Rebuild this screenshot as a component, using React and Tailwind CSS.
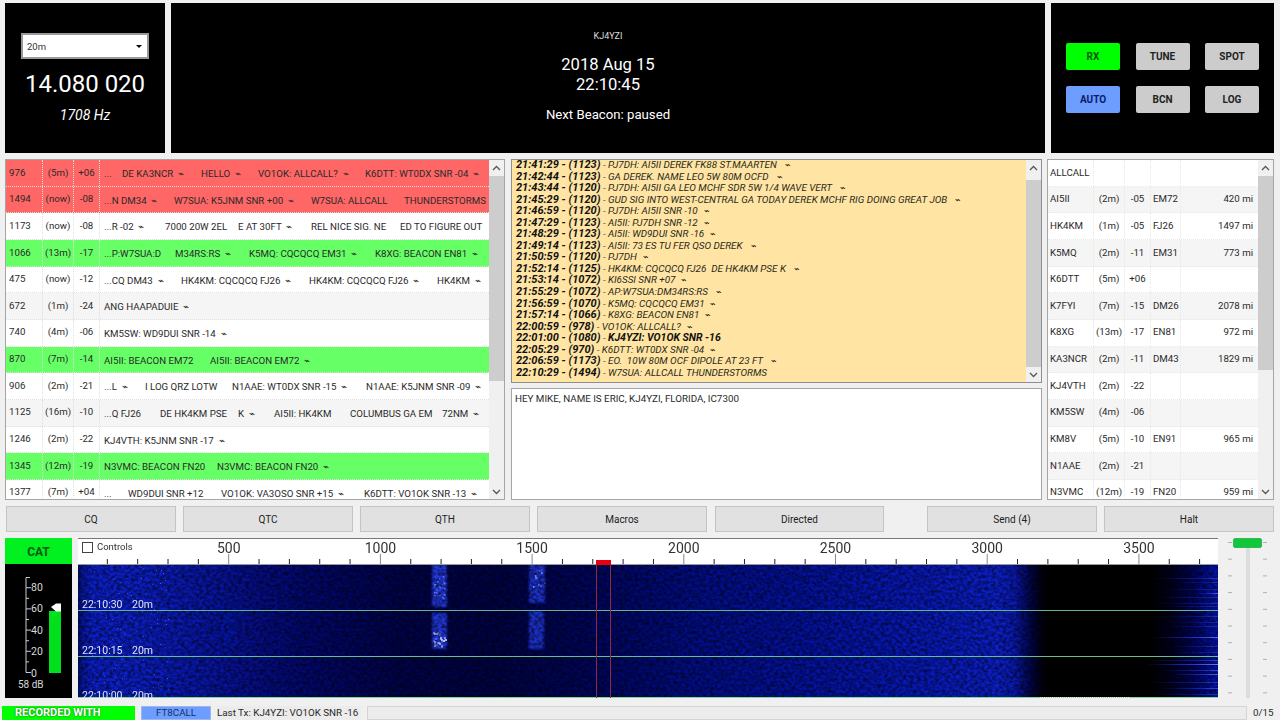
import React from 'react';

const W = ' ⌁';

const decodes = [
  { f: '976', a: '(5m)', s: '+06', c: 'red', m: [['...', 104], ['DE KA3NCR ' + W, 122], ['HELLO ' + W, 201], ['VO1OK: ALLCALL? ' + W, 258], ['K6DTT: WT0DX SNR -04 ' + W, 365]] },
  { f: '1494', a: '(now)', s: '-08', c: 'red', m: [['...N DM34 ' + W, 104], ['W7SUA: K5JNM SNR +00 ' + W, 174], ['W7SUA: ALLCALL', 311], ['THUNDERSTORMS', 404]] },
  { f: '1173', a: '(now)', s: '-08', m: [['...R -02 ' + W, 104], ['7000 20W 2EL', 165], ['E AT 30FT ' + W, 238], ['REL NICE SIG. NE', 311], ['ED TO FIGURE OUT', 400]] },
  { f: '1066', a: '(13m)', s: '-17', c: 'green', m: [['...P:W7SUA:D', 104], ['M34RS:RS ' + W, 175], ['K5MQ: CQCQCQ EM31 ' + W, 249], ['K8XG: BEACON EN81 ' + W, 375]] },
  { f: '475', a: '(now)', s: '-12', m: [['...CQ DM43 ' + W, 104], ['HK4KM: CQCQCQ FJ26 ' + W, 181], ['HK4KM: CQCQCQ FJ26 ' + W, 309], ['HK4KM ' + W, 437]] },
  { f: '672', a: '(1m)', s: '-24', m: [['ANG HAAPADUIE ' + W, 104]] },
  { f: '740', a: '(4m)', s: '-06', m: [['KM5SW: WD9DUI SNR -14 ' + W, 104]] },
  { f: '870', a: '(7m)', s: '-14', c: 'green', m: [['AI5II: BEACON EM72', 104], ['AI5II: BEACON EM72 ' + W, 210]] },
  { f: '906', a: '(2m)', s: '-21', m: [['...L ' + W, 104], ['I LOG QRZ LOTW', 145], ['N1AAE: WT0DX SNR -15 ' + W, 232], ['N1AAE: K5JNM SNR -09 ' + W, 366]] },
  { f: '1125', a: '(16m)', s: '-10', m: [['...Q FJ26', 104], ['DE HK4KM PSE', 160], ['K ' + W, 238], ['AI5II: HK4KM', 274], ['COLUMBUS GA EM', 350], ['72NM ' + W, 442]] },
  { f: '1246', a: '(2m)', s: '-22', m: [['KJ4VTH: K5JNM SNR -17 ' + W, 104]] },
  { f: '1345', a: '(12m)', s: '-19', c: 'green', m: [['N3VMC: BEACON FN20', 104], ['N3VMC: BEACON FN20 ' + W, 217]] },
  { f: '1377', a: '(7m)', s: '+04', m: [['...', 104], ['WD9DUI SNR +12', 128], ['VO1OK: VA3OSO SNR +15 ' + W, 221], ['K6DTT: VO1OK SNR -13 ' + W, 364]] },
];

const logLines = [
  ['21:41:29 - (1123)', 'PJ7DH: AI5II DEREK FK88 ST.MAARTEN  ' + W],
  ['21:42:44 - (1123)', 'GA DEREK. NAME LEO 5W 80M OCFD  ' + W],
  ['21:43:44 - (1120)', 'PJ7DH: AI5II GA LEO MCHF SDR 5W 1/4 WAVE VERT  ' + W],
  ['21:45:29 - (1120)', 'GUD SIG INTO WEST-CENTRAL GA TODAY DEREK MCHF RIG DOING GREAT JOB  ' + W],
  ['21:46:59 - (1120)', 'PJ7DH: AI5II SNR -10 ' + W],
  ['21:47:29 - (1123)', 'AI5II: PJ7DH SNR -12 ' + W],
  ['21:48:29 - (1123)', 'AI5II: WD9DUI SNR -16 ' + W],
  ['21:49:14 - (1123)', 'AI5II: 73 ES TU FER QSO DEREK  ' + W],
  ['21:50:59 - (1120)', 'PJ7DH ' + W],
  ['21:52:14 - (1125)', 'HK4KM: CQCQCQ FJ26  DE HK4KM PSE K  ' + W],
  ['21:53:14 - (1072)', 'KI6SSI SNR +07 ' + W],
  ['21:55:29 - (1072)', 'AP:W7SUA:DM34RS:RS  ' + W],
  ['21:56:59 - (1070)', 'K5MQ: CQCQCQ EM31 ' + W],
  ['21:57:14 - (1066)', 'K8XG: BEACON EN81 ' + W],
  ['22:00:59 - (978)', 'VO1OK: ALLCALL? ' + W],
  ['22:01:00 - (1080)', 'KJ4YZI: VO1OK SNR -16', true],
  ['22:05:29 - (970)', 'K6DTT: WT0DX SNR -04 ' + W],
  ['22:06:59 - (1173)', 'EO.  10W 80M OCF DIPOLE AT 23 FT  ' + W],
  ['22:10:29 - (1494)', 'W7SUA: ALLCALL THUNDERSTORMS'],
];

const stations = [
  ['ALLCALL'],
  ['AI5II', '(2m)', '-05', 'EM72', '420 mi'],
  ['HK4KM', '(1m)', '-05', 'FJ26', '1497 mi'],
  ['K5MQ', '(2m)', '-11', 'EM31', '773 mi'],
  ['K6DTT', '(5m)', '+06'],
  ['K7FYI', '(7m)', '-15', 'DM26', '2078 mi'],
  ['K8XG', '(13m)', '-17', 'EN81', '972 mi'],
  ['KA3NCR', '(2m)', '-11', 'DM43', '1829 mi'],
  ['KJ4VTH', '(2m)', '-22'],
  ['KM5SW', '(4m)', '-06'],
  ['KM8V', '(5m)', '-10', 'EN91', '965 mi'],
  ['N1AAE', '(2m)', '-21'],
  ['N3VMC', '(12m)', '-19', 'FN20', '959 mi'],
];

const hzX = (hz) => hz * 0.3034 - 1;

function Chevron({ up }) {
  return (
    <svg width="9" height="6" viewBox="0 0 9 6" fill="none" stroke="#555" strokeWidth="1.3">
      <path d={up ? 'M1 5l3.5-3.5L8 5' : 'M1 1l3.5 3.5L8 1'} />
    </svg>
  );
}

function Scrollbar({ top, height }) {
  return (
    <div className="w-[15px] shrink-0 self-stretch bg-[#f0f0f0] flex flex-col items-center relative">
      <div className="h-[15px] flex items-center justify-center"><Chevron up /></div>
      <div className="absolute left-0 w-[15px] bg-[#cdcdcd]" style={{ top, height }} />
      <div className="mt-auto h-[15px] flex items-center justify-center"><Chevron /></div>
    </div>
  );
}

function DecodeRow({ row, index }) {
  const bg = row.c === 'red' ? 'bg-[#ff6666]' : row.c === 'green' ? 'bg-[#66ff66]' : index % 2 ? 'bg-[#f5f5f5]' : 'bg-white';
  return (
    <div className={`flex h-[26.67px] shrink-0 items-center border-b border-dotted border-[#e0e0e0] ${bg}`}>
      <div className="w-[37px] h-full flex items-center pl-[3px] border-r border-dotted border-[#e0e0e0]">{row.f}</div>
      <div className="w-[31px] h-full flex items-center justify-center border-r border-dotted border-[#e0e0e0]">{row.a}</div>
      <div className="w-[26px] h-full flex items-center justify-center border-r border-dotted border-[#e0e0e0]">{row.s}</div>
      <div className="flex-1 h-full relative">
        {row.m.map(([text, x]) => (
          <span key={x} className="absolute top-[7px] whitespace-pre" style={{ left: x - 100 }}>{text}</span>
        ))}
      </div>
    </div>
  );
}

function StationRow({ row, index }) {
  const cell = 'h-full flex items-center border-r border-dotted border-[#e8e8e8]';
  return (
    <div className={`flex h-[26.67px] shrink-0 items-center border-b border-dotted border-[#e8e8e8] ${index % 2 ? 'bg-[#f5f5f5]' : 'bg-white'}`}>
      <div className={`${cell} w-[46px] pl-[2px] whitespace-nowrap`}>{row[0]}</div>
      <div className={`${cell} w-[31px] justify-center`}>{row[1]}</div>
      <div className={`${cell} w-[26px] justify-center`}>{row[2]}</div>
      <div className={`${cell} w-[30px] pl-[2px]`}>{row[3]}</div>
      <div className="h-full flex-1 flex items-center justify-end pr-[5px]">{row[4]}</div>
    </div>
  );
}

function ActionButton({ label, active }) {
  return (
    <div className={`w-[54px] h-[27px] rounded-[2px] flex items-center justify-center font-bold text-[10px] ${active || 'bg-[#cccccc] text-[#222]'}`}>
      {label}
    </div>
  );
}

function BarButton({ label, className }) {
  return (
    <div className={`h-[26px] pt-px bg-[#e1e1e1] border border-[#c4c4c4] flex items-center justify-center text-[#222] text-[10px] ${className}`}>{label}</div>
  );
}

function SMeter() {
  return (
    <svg width="67" height="134" viewBox="0 0 67 134" className="block">
      <path d="M25 13.5h-4v95h4" fill="none" stroke="#ccc" strokeWidth="1" />
      {[0, 1, 2, 3, 4, 5, 6, 7, 8].map((i) => (
        <line key={i} x1="21" x2={i % 2 ? 24 : 26} y1={108.5 - i * 10.6} y2={108.5 - i * 10.6} stroke="#ccc" />
      ))}
      {[['80', 23], ['60', 44], ['40', 66], ['20', 87], ['0', 109]].map(([t, y]) => (
        <text key={t} x="26" y={y + 4} fontSize="10.5" fill="#d8d8d8">{t}</text>
      ))}
      <rect x="44" y="47" width="12" height="62" fill="#00e01c" />
      <path d="M46 43l5-3.5h5v8h-5z" fill="#fff" />
      <text x="13" y="124" fontSize="10" fill="#d8d8d8">58 dB</text>
    </svg>
  );
}

function Ruler() {
  const ticks = [];
  for (let hz = 100; hz <= 3700; hz += 100) ticks.push(hz);
  return (
    <svg width="1140" height="26" viewBox="0 0 1140 26" className="absolute left-0 top-0">
      {ticks.map((hz) => (
        <line key={hz} x1={hzX(hz)} x2={hzX(hz)} y1={hz % 500 ? 20 : 15} y2="25" stroke={hz % 500 ? '#222' : '#888'} />
      ))}
      <rect x="0" y="25" width="1140" height="1" fill="#9a9a9a" />
      {[500, 1000, 1500, 2000, 2500, 3000, 3500].map((hz) => (
        <text key={hz} x={hzX(hz)} y="14" fontSize="14" textAnchor="middle" fill="#333">{hz}</text>
      ))}
      <rect x={596 - 78} y="21" width="15" height="5" fill="#e8000c" />
    </svg>
  );
}

// small deterministic generator so the speckle stays put between renders
function speckle(count, x0, x1, y0, y1, seed) {
  let s = seed;
  const next = () => {
    s = (s * 16807) % 2147483647;
    return s / 2147483647;
  };
  const out = [];
  for (let i = 0; i < count; i++) {
    out.push({ x: Math.round(x0 + next() * (x1 - x0)), y: Math.round(y0 + next() * (y1 - y0)), o: 0.2 + next() * 0.5 });
  }
  return out;
}

const streaks = [
  [14, 0.35, 1150], [18, 0.3, 1176], [25, 0.25, 1160], [29, 0.7, 1195], [33, 0.3, 1156], [39, 0.25, 1150], [42, 0.25, 1160],
  [52, 0.3, 1160], [58, 0.25, 1166], [62, 0.25, 1158], [73, 0.8, 1152], [82, 0.3, 1166], [88, 0.25, 1170],
  [96, 0.4, 1140], [100, 0.9, 1144], [106, 0.5, 1160], [110, 0.7, 1170], [118, 0.4, 1145], [124, 0.5, 1160], [130, 0.3, 1150],
];

function Waterfall() {
  const off = 78;
  return (
    <svg width="1140" height="134" viewBox="0 0 1140 134" className="block">
      <defs>
        <linearGradient id="wf">
          {[
            [78, '#030f70'], [84, '#0718a8'], [92, '#0c20d0'], [130, '#0c20cc'], [180, '#0a1ab8'], [250, '#060f90'], [300, '#030874'], [400, '#01034e'],
            [500, '#010348'], [600, '#000664'], [700, '#020e8c'], [800, '#0412a0'], [900, '#0718b8'], [1000, '#0c20cc'], [1014, '#0a1ab8'],
            [1030, '#020650'], [1042, '#000010'], [1050, '#000000'], [1150, '#000000'], [1170, '#00001c'], [1195, '#000560'], [1218, '#0414b8'],
          ].map(([x, c]) => (
            <stop key={x} offset={(x - 78) / 1140} stopColor={c} />
          ))}
        </linearGradient>
        <linearGradient id="streak">
          <stop offset="0" stopColor="#2030d0" stopOpacity="0" />
          <stop offset="0.7" stopColor="#3040e0" />
          <stop offset="1" stopColor="#8088f0" />
        </linearGradient>
        <filter id="grain" x="0" y="0" width="100%" height="100%">
          <feTurbulence type="fractalNoise" baseFrequency="0.28 0.34" numOctaves="2" seed="7" />
          <feColorMatrix values="0 0 0 0 0  0 0 0 0 0  0 0 0 0 0  1.3 0 0 0 -0.4" />
        </filter>
        <filter id="soft" x="-30%" y="-30%" width="160%" height="160%"><feGaussianBlur stdDeviation="1.2" /></filter>
      </defs>
      <rect width="1140" height="134" fill="url(#wf)" />
      <g filter="url(#soft)">
        <rect x={432 - off} y="0" width="15" height="43" fill="#2038e0" />
        <rect x={432 - off} y="49" width="15" height="36" fill="#2038e0" />
        <rect x={529 - off} y="0" width="16" height="39" fill="#1c30d0" />
        <rect x={529 - off} y="47" width="15" height="38" fill="#1c30d0" />
        <rect x={222 - off} y="47" width="14" height="36" fill="#0c1cc0" opacity="0.35" />
      </g>
      <rect width="1140" height="134" fill="#000" filter="url(#grain)" />
      {speckle(24, 356, 366, 12, 34, 11).map((p, i) => <rect key={i} x={p.x} y={p.y} width="1.5" height="1.5" fill="#8fa8ff" opacity={p.o} />)}
      {speckle(30, 355, 367, 68, 82, 23).map((p, i) => <rect key={i} x={p.x} y={p.y} width="2" height="2" fill="#c8d0f8" opacity={p.o} />)}
      {speckle(10, 455, 466, 2, 25, 37).map((p, i) => <rect key={i} x={p.x} y={p.y} width="1.5" height="2" fill="#a8b8ff" opacity={p.o} />)}
      {speckle(110, 14, 90, 2, 128, 51).map((p, i) => <rect key={i} x={p.x} y={p.y} width="1" height="1" fill="#7080f0" opacity={p.o} />)}
      {streaks.map(([y, o, x]) => (
        <rect key={y} x={x - off} y={y} width={1218 - x} height="1" fill="url(#streak)" opacity={o} />
      ))}
      <rect y="46" width="1140" height="1" fill="#62b48c" />
      <rect y="92" width="1140" height="1" fill="#62c08c" />
      <rect y="133" width="1140" height="1" fill="#80d890" />
      <line x1={1040 - off} x2={1130 - off} y1="133.5" y2="133.5" stroke="#e8f0e8" strokeDasharray="1 1" />
      <rect x={596 - off} y="0" width="1" height="134" fill="#8c2c3c" />
      <rect x={610 - off} y="0" width="1" height="134" fill="#8c2c3c" />
      <g fontSize="10.5" fill="#dfe3ff">
        <text x="4" y="44">22:10:30</text>
        <text x="54" y="44">20m</text>
        <text x="4" y="90">22:10:15</text>
        <text x="54" y="90">20m</text>
        <text x="4" y="135">22:10:00</text>
        <text x="54" y="135">20m</text>
      </g>
    </svg>
  );
}

function VolumeSlider() {
  return (
    <svg width="40" height="160" viewBox="0 0 40 160" className="block">
      <rect x="18" y="4" width="4" height="156" fill="#dcdcdc" />
      {[0, 1, 2, 3, 4, 5, 6, 7, 8, 9].map((i) => (
        <g key={i} stroke="#b0b0b0">
          <line x1="0" x2="4" y1={4.5 + i * 16.7} y2={4.5 + i * 16.7} />
          <line x1="35" x2="39" y1={4.5 + i * 16.7} y2={4.5 + i * 16.7} />
        </g>
      ))}
      <rect x="5.5" y="0.5" width="28" height="9" rx="1.5" fill="#10c83c" stroke="#0a9a2c" strokeWidth="0.6" />
    </svg>
  );
}

export default function App() {
  return (
    <div className="w-[1280px] h-[720px] overflow-hidden bg-[#f0f0f0] flex flex-col pt-[3px] text-[9.7px] text-[#2a2a2a] font-['Roboto',sans-serif]">
      {/* top panels */}
      <div className="flex h-[150px] shrink-0 pl-[5px] gap-[6px] text-white">
        <div className="w-[160px] bg-black flex flex-col items-center">
          <div className="mt-[30px] w-[128px] h-[26px] bg-white border-2 border-[#9a9a9a] flex items-center pt-[3px] pl-[4px] pr-[2px] text-[#333] text-[9.5px]">
            <span className="flex-1">20m</span>
            <span className="w-0 h-0 border-x-[3px] border-x-transparent border-t-[3px] border-t-black mr-[3px] -mt-[3px]" />
          </div>
          <div className="mt-[10px] text-[24px] leading-[30px] text-white">14.080 020</div>
          <div className="mt-[7px] italic text-[14px] leading-[18px]">1708 Hz</div>
        </div>
        <div className="w-[874px] bg-black flex flex-col items-center">
          <div className="mt-[27px] text-[9px] leading-[12px] text-[#ddd]">KJ4YZI</div>
          <div className="mt-[13px] text-[16.6px] leading-[20px]">2018 Aug 15</div>
          <div className="text-[16.6px] leading-[19px]">22:10:45</div>
          <div className="mt-[13px] text-[13.2px] leading-[16px]">Next Beacon: paused</div>
        </div>
        <div className="w-[223px] bg-black pl-[15px] pt-[40px] flex flex-col gap-[16px]">
          <div className="flex gap-[15.5px]">
            <ActionButton label="RX" active="bg-[#00ff00] text-[#0a5a0a]" />
            <ActionButton label="TUNE" />
            <ActionButton label="SPOT" />
          </div>
          <div className="flex gap-[15.5px]">
            <ActionButton label="AUTO" active="bg-[#6d9eff] text-[#0a1a6a]" />
            <ActionButton label="BCN" />
            <ActionButton label="LOG" />
          </div>
        </div>
      </div>

      {/* decode tables */}
      <div className="flex h-[341px] shrink-0 mt-[6px] pl-[5px]">
        <div className="w-[500px] border border-[#a5a5a5] flex overflow-hidden bg-white">
          <div className="flex-1 flex flex-col overflow-hidden">
            {decodes.map((row, i) => <DecodeRow key={row.f} row={row} index={i} />)}
          </div>
          <Scrollbar top={16} height={205} />
        </div>
        <div className="w-[531px] ml-[6px] flex flex-col gap-[5px]">
          <div className="h-[224px] border border-[#8f8f8f] bg-[#ffe4a3] flex overflow-hidden">
            <div className="flex-1 pl-[4px] text-[9.9px] leading-[11.56px] italic text-[#2a2a20] whitespace-pre -mt-[1px]">
              {logLines.map(([head, msg, bold]) => (
                <div key={head} className="h-[11.56px]">
                  <span className="font-bold text-[11px] text-[#111]">{head}</span>
                  <span> - </span>
                  <span className={bold ? 'font-bold text-[10.5px] text-[#111]' : ''}>{msg}</span>
                </div>
              ))}
            </div>
            <Scrollbar top={20} height={187} />
          </div>
          <div className="flex-1 border border-[#a5a5a5] bg-white pl-[3px] pt-[4px] text-[9.8px] leading-[12px]">
            HEY MIKE, NAME IS ERIC, KJ4YZI, FLORIDA, IC7300
          </div>
        </div>
        <div className="w-[227px] ml-[5px] border border-[#a5a5a5] flex overflow-hidden bg-white">
          <div className="flex-1 flex flex-col overflow-hidden">
            {stations.map((row, i) => <StationRow key={row[0]} row={row} index={i} />)}
          </div>
          <Scrollbar top={16} height={194} />
        </div>
      </div>

      {/* action bar */}
      <div className="flex shrink-0 mt-[6px] pl-[6px]">
        <BarButton label="CQ" className="w-[170px]" />
        <BarButton label="QTC" className="w-[170px] ml-[7px]" />
        <BarButton label="QTH" className="w-[170px] ml-[7px]" />
        <BarButton label="Macros" className="w-[170px] ml-[7px]" />
        <BarButton label="Directed" className="w-[169px] ml-[8px]" />
        <BarButton label="Send (4)" className="w-[170px] ml-[43px]" />
        <BarButton label="Halt" className="w-[170px] ml-[7px]" />
      </div>

      {/* waterfall */}
      <div className="flex h-[160px] shrink-0 mt-[6px] pl-[5px]">
        <div className="w-[67px] bg-black flex flex-col">
          <div className="h-[26px] pt-px bg-[#00f020] flex items-center justify-center font-bold text-[12px] text-[#0a5a14]">CAT</div>
          <SMeter />
        </div>
        <div className="ml-[6px] w-[1140px] flex flex-col">
          <div className="relative h-[26px] bg-white border-t border-[#777]">
            <Ruler />
            <label className="relative flex items-center gap-[4px] pl-[4px] pt-[1px] text-[9.5px] text-[#333]">
              <span className="w-[11px] h-[11px] border border-[#444] bg-white" />
              Controls
            </label>
          </div>
          <Waterfall />
        </div>
        <div className="ml-[10px]">
          <VolumeSlider />
        </div>
      </div>

      {/* status bar */}
      <div className="flex flex-1 mt-[8px] pl-[2px] items-start text-[9.8px]">
        <div className="w-[133px] h-[14px] pl-[13px] bg-[#00ff00] flex items-center font-bold text-[11px] text-white [text-shadow:0_0_2px_#155a15]">RECORDED WITH</div>
        <div className="w-[70px] h-[14px] ml-[6px] bg-[#6d9eff] border border-[#9ab8ee] flex items-center justify-center text-[#14306a]">FT8CALL</div>
        <div className="w-[144px] h-[14px] ml-[6px] bg-[#ececec] flex items-center whitespace-nowrap">Last Tx: KJ4YZI: VO1OK SNR -16</div>
        <div className="w-[880px] h-[14px] ml-[6px] bg-[#ececec] border border-[#d4d4d4]" />
        <div className="ml-[6px] h-[14px] flex items-center">0/15</div>
      </div>
    </div>
  );
}
